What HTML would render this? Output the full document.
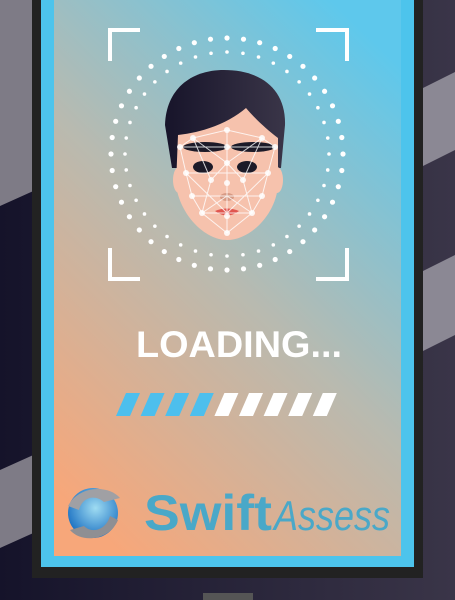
<!DOCTYPE html>
<html><head><meta charset="utf-8"><style>
*{margin:0;padding:0}
body{width:455px;height:600px;overflow:hidden;position:relative;background:linear-gradient(90deg,#15132a,#3a3548);font-family:"Liberation Sans",sans-serif}
.abs{position:absolute}
</style></head><body>
<svg class="abs" style="left:0;top:0" width="455" height="600">
 <polygon points="0,0 40,0 40,188 0,206" fill="#7e7b86"/>
 <polygon points="0,470 40,452 40,530 0,548" fill="#7e7b86"/>
 <polygon points="415,92 455,72 455,150 415,170" fill="#8b8894"/>
 <polygon points="415,275 455,255 455,335 415,355" fill="#8b8894"/>
 <rect x="32" y="0" width="391" height="578" fill="#222"/>
 <rect x="41" y="0" width="373" height="567" fill="#4dc4ec"/>
 <defs><linearGradient id="g" x1="0.2" y1="1" x2="0.8" y2="0">
  <stop offset="0" stop-color="#f7a77a"/><stop offset="0.5" stop-color="#b8bab0"/><stop offset="1" stop-color="#5ec8ec"/></linearGradient>
 <linearGradient id="h" x1="0" x2="1"><stop offset="0" stop-color="#17142a"/><stop offset="1" stop-color="#3a3548"/></linearGradient>
 <radialGradient id="gl" cx="0.55" cy="0.4" r="0.6"><stop offset="0" stop-color="#9fdcf2"/><stop offset="1" stop-color="#1f74c4"/></radialGradient></defs>
 <rect x="54" y="0" width="347" height="556" fill="url(#g)"/>
 <rect x="203" y="593" width="50" height="7" fill="#555"/>
 <g stroke="#fff" stroke-width="4" fill="none">
  <path d="M110,61V30H140"/><path d="M316,30H347V61"/><path d="M110,248V279H140"/><path d="M316,279H347V248"/>
 </g>
 <g id="dots" fill="#fff"></g>
 <path d="M172,168 L165,125 C166,90 190,70 224,70 C262,70 286,90 285,125 L281,168Z" fill="url(#h)"/>
 <path d="M178,135 C205,132 230,122 246,108 C258,122 270,132 278,138 L278,185 C276,215 250,240 227,240 C205,240 180,215 176,185Z" fill="#f6c2ad"/>
 <ellipse cx="179" cy="180" rx="6" ry="13" fill="#f6c2ad"/><ellipse cx="277" cy="180" rx="6" ry="13" fill="#f6c2ad"/>
 <ellipse cx="205" cy="147" rx="22" ry="5" fill="#1c1a28"/><ellipse cx="253" cy="147" rx="22" ry="5" fill="#1c1a28"/>
 <ellipse cx="203" cy="167" rx="10" ry="6" fill="#1c1a28"/><ellipse cx="247" cy="167" rx="10" ry="6" fill="#1c1a28"/>
 <ellipse cx="227" cy="197" rx="7" ry="4" fill="#d79a84"/>
 <path d="M215,211 Q227,206 239,211 Q227,220 215,211Z" fill="#e0564f"/>
 <g stroke="#fff" stroke-opacity="0.8" stroke-width="1" fill="none">
  <path d="M193,138 L227,130 L262,138 L275,147 L268,173 L262,196 L252,213 L227,233 L202,213 L192,196 L186,173 L180,147Z"/>
  <path d="M227,130 L227,233 M180,147 L275,147 M186,173 L268,173 M192,196 L262,196 M202,213 L252,213 M193,138 L211,180 L227,163 L243,180 L262,138 M211,180 L202,213 L227,196 L252,213 L243,180 M227,163 L193,138 M227,163 L262,138 M186,173 L227,213 L268,173"/>
 </g>
 <g fill="#fff" fill-opacity="0.85">
  <circle cx="227" cy="130" r="3"/><circle cx="193" cy="138" r="3"/><circle cx="262" cy="138" r="3"/><circle cx="180" cy="147" r="3"/><circle cx="275" cy="147" r="3"/><circle cx="227" cy="147" r="3"/><circle cx="227" cy="163" r="3"/><circle cx="186" cy="173" r="3"/><circle cx="268" cy="173" r="3"/><circle cx="211" cy="180" r="3"/><circle cx="243" cy="180" r="3"/><circle cx="227" cy="183" r="3"/><circle cx="192" cy="196" r="3"/><circle cx="262" cy="196" r="3"/><circle cx="202" cy="213" r="3"/><circle cx="252" cy="213" r="3"/><circle cx="227" cy="216" r="3"/><circle cx="227" cy="233" r="3"/>
 </g>
 <text x="136" y="357" textLength="206" lengthAdjust="spacingAndGlyphs" font-family="Liberation Sans,sans-serif" font-weight="bold" font-size="37" fill="#fff">LOADING...</text>
 <g id="bar"></g>
 <circle cx="93" cy="513" r="25" fill="url(#gl)"/>
 <path d="M68,506 C78,486 108,484 120,498 L104,502 C95,494 82,497 79,510Z" fill="#a0a0a4"/>
 <path d="M118,520 C110,540 82,544 70,530 L84,526 C92,534 106,530 110,516Z" fill="#8f8f93"/>
 <text x="144" y="530" textLength="128" lengthAdjust="spacingAndGlyphs" font-family="Liberation Sans,sans-serif" font-weight="bold" font-size="50" fill="#4aa8c8">Swift</text>
 <text x="274" y="530" textLength="116" lengthAdjust="spacingAndGlyphs" font-family="Liberation Sans,sans-serif" font-style="italic" font-size="42" fill="#4aa8c8">Assess</text>
</svg>
<script>
var d=document.getElementById('dots'),s='';
for(var i=0;i<44;i++){var a=i/44*2*Math.PI;s+='<circle cx="'+(227+116*Math.cos(a))+'" cy="'+(154+116*Math.sin(a))+'" r="2.6"/>';}
for(var i=0;i<40;i++){var a=i/40*2*Math.PI;s+='<circle cx="'+(227+102*Math.cos(a))+'" cy="'+(154+102*Math.sin(a))+'" r="1.8"/>';}
d.innerHTML=s;
var b=document.getElementById('bar'),t='';
for(var i=0;i<9;i++){var x=116+i*24.6;t+='<polygon points="'+(x+10)+',393 '+(x+24)+',393 '+(x+14)+',416 '+x+',416" fill="'+(i<4?'#4dbfed':'#fff')+'"/>';}
b.innerHTML=t;
</script>
</body></html>
